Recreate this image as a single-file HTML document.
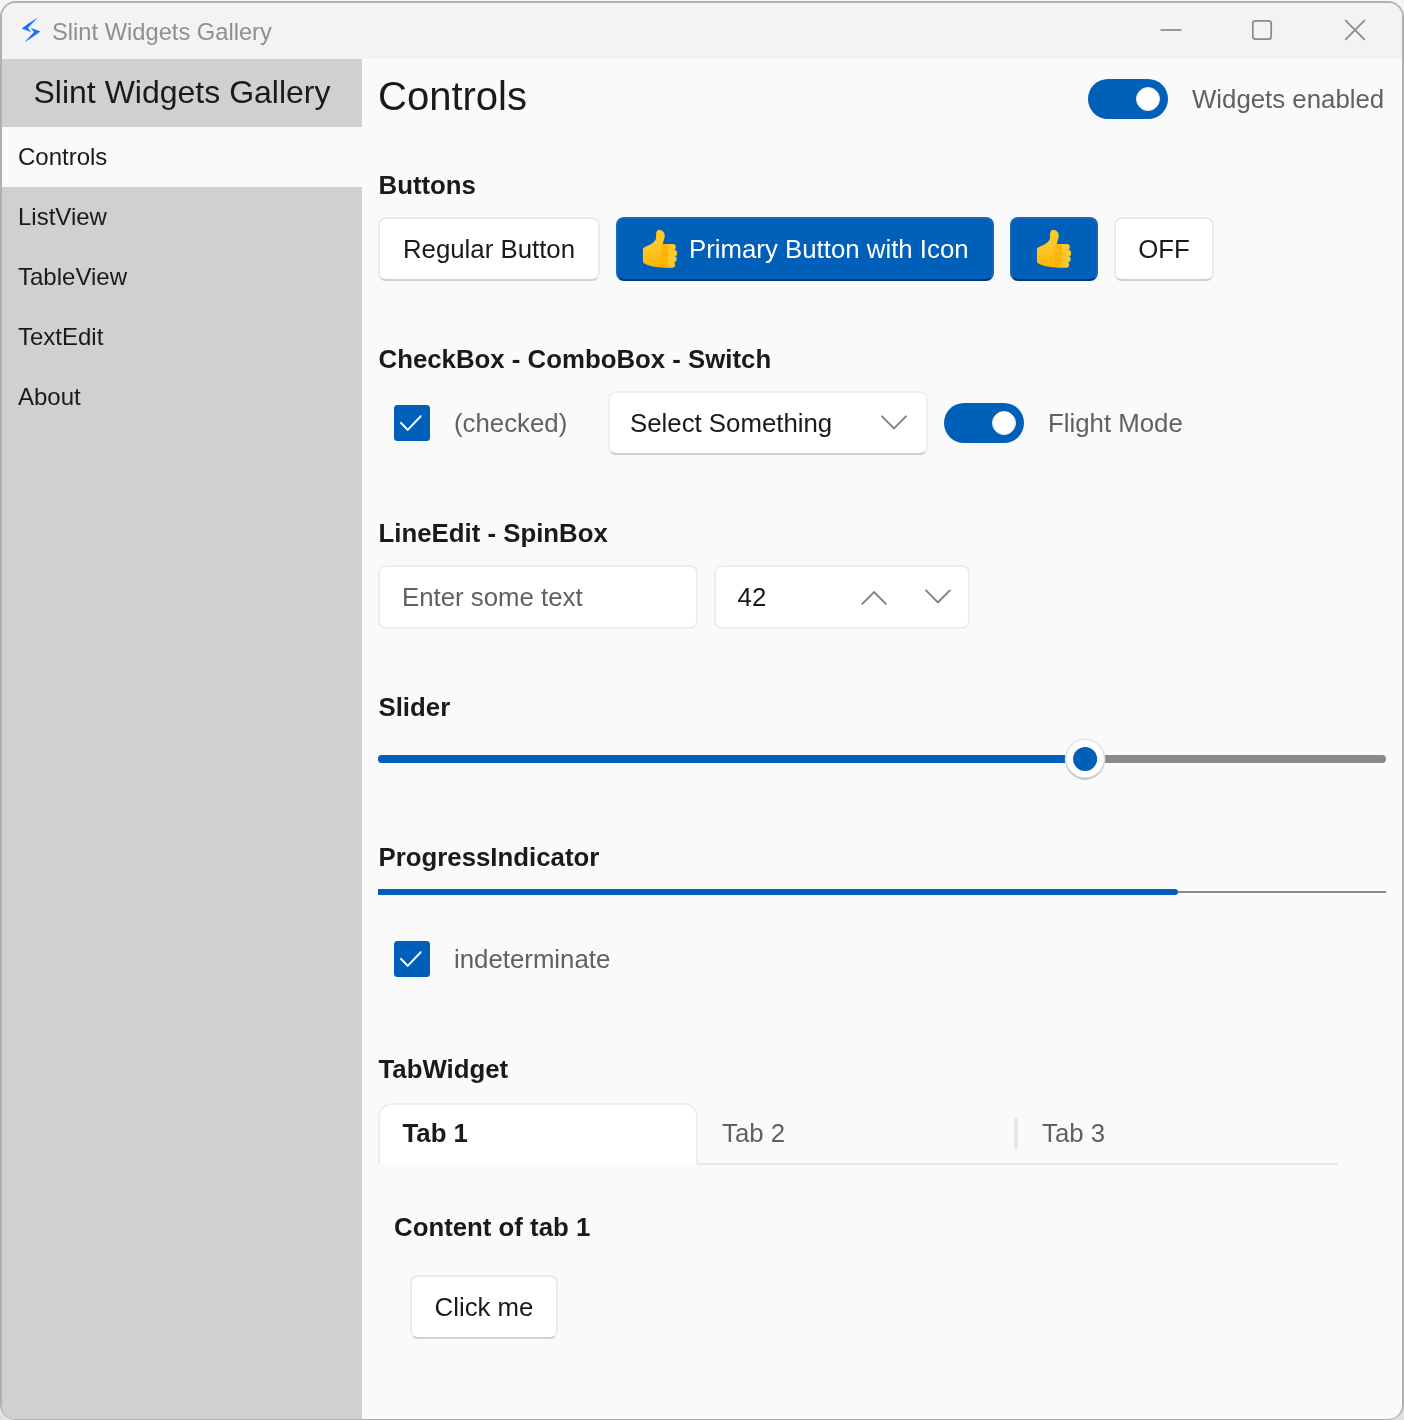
<!DOCTYPE html>
<html lang="en">
<head>
<meta charset="utf-8">
<title>Slint Widgets Gallery</title>
<style>
*{box-sizing:border-box;margin:0;padding:0}
html,body{width:1404px;height:1420px;overflow:hidden;background:linear-gradient(#f5f5f5 0,#f5f5f5 710px,#e0e0e0 710px)}
body{font-family:"Liberation Sans",sans-serif;color:#1a1a1a;position:relative}
.abs{position:absolute}
#win{position:absolute;left:0;top:1px;width:1404px;height:1419px;border-radius:16px;background:#b0b0b0;overflow:hidden}
#inner{position:absolute;left:2px;top:2px;right:2px;bottom:1px;border-radius:14px;overflow:hidden;background:#fafafa}
/* coordinates inside #stage are the target pixel coordinates */
#stage{position:absolute;left:-2px;top:-3px;width:1404px;height:1420px;will-change:transform}
#titlebar{left:0;top:0;width:1404px;height:59px;background:#f3f3f3}
#wtitle{left:52px;top:17px;font-size:23.7px;line-height:30px;color:#8f8f8f;white-space:nowrap}
#sidebar{left:0;top:59px;width:362px;height:1361px;background:#d0d0d0}
#sbhead{left:0;top:59px;width:362px;height:68px;line-height:68px;text-align:center;font-size:32px;white-space:nowrap;padding-left:2px}
.nav{left:0;width:362px;height:60px;line-height:60px;font-size:24px;padding-left:18px;white-space:nowrap}
.nav.sel{background:#fafafa}
h1{position:absolute;left:378px;top:72px;transform:translateY(-.6px);font-size:40px;font-weight:normal;line-height:50px;white-space:nowrap}
.hd{position:absolute;left:378.5px;transform:translateY(-.7px);font-size:25.8px;font-weight:bold;line-height:30px;white-space:nowrap}
.t{position:absolute;font-size:25.8px;line-height:30px;white-space:nowrap}
.sec{color:#616161}
.btn{position:absolute;height:64px;border-radius:8px;background:#fff;border:2px solid #ebebeb;border-bottom-color:#d2d2d2;font-size:25.8px;line-height:60px;text-align:center;white-space:nowrap}
.btn.pri{background:#005fb8;border:2px solid #1168bc;border-bottom-color:#003a74;color:#fff}
.field{position:absolute;height:64px;border-radius:8px;background:#fff;border:2px solid #eeeeee}
.sw{position:absolute;width:80px;height:40px;border-radius:20px;background:#005fb8}
.sw i{position:absolute;left:48px;top:8px;width:24px;height:24px;border-radius:12px;background:#fff;border:1.5px solid #eae4de}
.cb{position:absolute;width:36px;height:36px;border-radius:3.5px;background:#005fb8}
svg{position:absolute;overflow:visible}
</style>
</head>
<body>
<div id="win"><div id="inner"><div id="stage">

<div id="titlebar" class="abs"></div>
<div id="wtitle" class="abs">Slint Widgets Gallery</div>

<div id="sidebar" class="abs"></div>
<div id="sbhead" class="abs"><span style="display:inline-block;transform:translateY(-.6px)">Slint Widgets Gallery</span></div>
<div class="abs nav sel" style="top:127px">Controls</div>
<div class="abs nav" style="top:187px">ListView</div>
<div class="abs nav" style="top:247px">TableView</div>
<div class="abs nav" style="top:307px">TextEdit</div>
<div class="abs nav" style="top:367px">About</div>

<h1>Controls</h1>

<!-- title bar icon + window controls -->
<svg class="abs" style="left:20px;top:16px" width="24" height="28" viewBox="20 16 24 28">
  <path d="M36.7 18.4 Q28.9 23.1 22.0 28.4 L30.8 31.8 L27.7 28.0 Z" fill="#1670f0" stroke="#1670f0" stroke-width=".4" stroke-linejoin="round"/>
  <path d="M25.3 41.6 Q33.1 36.9 40.1 31.6 L31.2 28.2 L34.3 32.0 Z" fill="#1670f0" stroke="#1670f0" stroke-width=".4" stroke-linejoin="round"/>
</svg>
<svg class="abs" style="left:1150px;top:10px" width="230" height="40" viewBox="1150 10 230 40" fill="none" stroke="#8a8a8a" stroke-width="1.7">
  <path d="M1160.5 30 H1181.5"/>
  <rect x="1252.8" y="20.8" width="18.4" height="18.4" rx="2.6"/>
  <path d="M1345.2 20.2 L1364.8 39.8 M1364.8 20.2 L1345.2 39.8"/>
</svg>

<!-- header switch -->
<div class="sw" style="left:1088px;top:79px"><i></i></div>
<div class="t sec" style="left:1192px;top:84px">Widgets enabled</div>

<!-- Buttons -->
<div class="hd" style="top:171px">Buttons</div>
<div class="btn" style="left:378px;top:217px;width:222px">Regular Button</div>
<div class="btn pri" style="left:616px;top:217px;width:378px;text-align:left;padding-left:71px">Primary Button with Icon</div>
<div class="btn pri" style="left:1010px;top:217px;width:88px"></div>
<div class="btn" style="left:1114px;top:217px;width:100px">OFF</div>
<svg class="abs" style="left:638px;top:226px" width="44" height="46" viewBox="0 0 44 46">
  <linearGradient id="pg1" x1="0" y1="0" x2="0" y2="1"><stop offset="0" stop-color="#ffca28"/><stop offset=".55" stop-color="#ffc526"/><stop offset="1" stop-color="#ffb300"/></linearGradient>
  <linearGradient id="fg1" x1="0" y1="0" x2="1" y2="0"><stop offset="0" stop-color="#ffb300"/><stop offset=".38" stop-color="#ffb506"/><stop offset=".5" stop-color="#ffc629"/><stop offset="1" stop-color="#ffca28"/></linearGradient>
  <path fill="url(#pg1)" d="M19.4 4.6 C20.2 3.9 21.2 3.8 22.2 3.9 C23.4 4.1 24.4 4.6 25.1 5.6 C25.9 6.6 26.6 7.6 26.7 8.9 C26.8 10.3 26.5 11.7 26.2 13.0 C25.9 14.2 25.4 15.4 25.1 16.6 L24.8 18.6 L27 18.5 L27 41.6 L25.9 41.6 C22.2 41.5 18.5 41.2 14.9 40.5 C13.5 40.3 12.3 39.8 11.0 39.4 C9.3 38.9 7.6 38.5 6.2 37.6 C5.5 37.1 4.9 36.4 4.9 35.6 L4.9 23.3 C4.9 22.3 5.6 21.6 6.5 21.2 C8.1 20.5 9.8 19.9 11.3 19.1 C12.9 18.3 14.3 17.3 15.5 16.2 C16.5 15.4 17.3 14.4 17.8 13.3 C18.3 11.7 18.0 9.8 18.1 8.1 C18.1 7.3 18.3 6.5 18.6 5.8 C18.8 5.3 19.0 4.9 19.4 4.6 Z"/>
  <path fill="none" stroke="#f2a600" stroke-width=".8" stroke-linecap="round" d="M17.3 32.4 C19.6 32.3 21.4 31.1 22.4 29.0"/>
  <rect x="23.4" y="18.0" width="14.4" height="6.3" rx="3" fill="url(#fg1)"/>
  <rect x="23.6" y="24.1" width="15.5" height="6.3" rx="3" fill="url(#fg1)"/>
  <rect x="23.6" y="30.1" width="15.0" height="6.1" rx="3" fill="url(#fg1)"/>
  <rect x="23.4" y="35.8" width="13.7" height="6.0" rx="3" fill="url(#fg1)"/>
  <path fill="none" stroke="#ffd04a" stroke-opacity=".55" stroke-width=".5" stroke-linecap="round" d="M24.6 24.25 H36 M24.6 30.2 H37.2 M24.6 35.95 H36.4"/>
  <path fill="none" stroke="#f5a900" stroke-opacity=".7" stroke-width=".7" stroke-linecap="round" d="M23.5 19.6 C22.6 23 22.9 26 23.7 29.4 C23.0 33 23.2 37 24.4 40.6"/>
</svg>
<svg class="abs" style="left:1032px;top:226px" width="44" height="46" viewBox="0 0 44 46">
  <linearGradient id="pg2" x1="0" y1="0" x2="0" y2="1"><stop offset="0" stop-color="#ffca28"/><stop offset=".55" stop-color="#ffc526"/><stop offset="1" stop-color="#ffb300"/></linearGradient>
  <linearGradient id="fg2" x1="0" y1="0" x2="1" y2="0"><stop offset="0" stop-color="#ffb300"/><stop offset=".38" stop-color="#ffb506"/><stop offset=".5" stop-color="#ffc629"/><stop offset="1" stop-color="#ffca28"/></linearGradient>
  <path fill="url(#pg2)" d="M19.4 4.6 C20.2 3.9 21.2 3.8 22.2 3.9 C23.4 4.1 24.4 4.6 25.1 5.6 C25.9 6.6 26.6 7.6 26.7 8.9 C26.8 10.3 26.5 11.7 26.2 13.0 C25.9 14.2 25.4 15.4 25.1 16.6 L24.8 18.6 L27 18.5 L27 41.6 L25.9 41.6 C22.2 41.5 18.5 41.2 14.9 40.5 C13.5 40.3 12.3 39.8 11.0 39.4 C9.3 38.9 7.6 38.5 6.2 37.6 C5.5 37.1 4.9 36.4 4.9 35.6 L4.9 23.3 C4.9 22.3 5.6 21.6 6.5 21.2 C8.1 20.5 9.8 19.9 11.3 19.1 C12.9 18.3 14.3 17.3 15.5 16.2 C16.5 15.4 17.3 14.4 17.8 13.3 C18.3 11.7 18.0 9.8 18.1 8.1 C18.1 7.3 18.3 6.5 18.6 5.8 C18.8 5.3 19.0 4.9 19.4 4.6 Z"/>
  <path fill="none" stroke="#f2a600" stroke-width=".8" stroke-linecap="round" d="M17.3 32.4 C19.6 32.3 21.4 31.1 22.4 29.0"/>
  <rect x="23.4" y="18.0" width="14.4" height="6.3" rx="3" fill="url(#fg2)"/>
  <rect x="23.6" y="24.1" width="15.5" height="6.3" rx="3" fill="url(#fg2)"/>
  <rect x="23.6" y="30.1" width="15.0" height="6.1" rx="3" fill="url(#fg2)"/>
  <rect x="23.4" y="35.8" width="13.7" height="6.0" rx="3" fill="url(#fg2)"/>
  <path fill="none" stroke="#ffd04a" stroke-opacity=".55" stroke-width=".5" stroke-linecap="round" d="M24.6 24.25 H36 M24.6 30.2 H37.2 M24.6 35.95 H36.4"/>
  <path fill="none" stroke="#f5a900" stroke-opacity=".7" stroke-width=".7" stroke-linecap="round" d="M23.5 19.6 C22.6 23 22.9 26 23.7 29.4 C23.0 33 23.2 37 24.4 40.6"/>
</svg>

<!-- CheckBox - ComboBox - Switch -->
<div class="hd" style="top:345px">CheckBox - ComboBox - Switch</div>
<div class="cb" style="left:394px;top:405px"><svg style="left:0;top:0" width="36" height="36" viewBox="0 0 36 36" fill="none" stroke="#fff" stroke-width="2" stroke-linecap="round" stroke-linejoin="round"><path d="M7.0 17.9 L13.7 24.9 L26.7 11.2"/></svg></div>
<div class="t sec" style="left:454px;top:408px">(checked)</div>
<div class="field" style="left:608px;top:391px;width:320px;border-bottom-color:#cfcfcf"></div>
<div class="t" style="left:630px;top:408px">Select Something</div>
<svg class="abs" style="left:880px;top:414px" width="28" height="18" viewBox="880 414 28 18" fill="none" stroke="#808080" stroke-width="1.9" stroke-linecap="round"><path d="M882 416.3 L894 428.3 L906 416.3"/></svg>
<div class="sw" style="left:944px;top:403px"><i></i></div>
<div class="t sec" style="left:1048px;top:408px">Flight Mode</div>

<!-- LineEdit - SpinBox -->
<div class="hd" style="top:519px">LineEdit - SpinBox</div>
<div class="field" style="left:378px;top:565px;width:320px"></div>
<div class="t sec" style="left:402px;top:582px">Enter some text</div>
<div class="field" style="left:714px;top:565px;width:256px"></div>
<div class="t" style="left:737.6px;top:582px">42</div>
<svg class="abs" style="left:860px;top:588px" width="92" height="18" viewBox="860 588 92 18" fill="none" stroke="#808080" stroke-width="1.9" stroke-linecap="round"><path d="M862.3 603.8 L874.1 592 L885.9 603.8"/><path d="M926 590.4 L937.9 602.3 L949.8 590.4"/></svg>

<!-- Slider -->
<div class="hd" style="top:693px">Slider</div>
<div class="abs" style="left:378px;top:755px;width:1008px;height:8px;border-radius:4px;background:#8a8a8a"></div>
<div class="abs" style="left:378px;top:755px;width:700px;height:8px;border-radius:4px 0 0 4px;background:#005fb8"></div>
<svg class="abs" style="left:1060px;top:734px" width="50" height="50" viewBox="1060 734 50 50">
  <linearGradient id="thg" x1="0" y1="0" x2="0" y2="1"><stop offset="0" stop-color="#ebebeb"/><stop offset=".55" stop-color="#dedede"/><stop offset="1" stop-color="#c6c6c6"/></linearGradient>
  <ellipse cx="1085.1" cy="759" rx="20.3" ry="20.9" fill="url(#thg)"/>
  <circle cx="1085.1" cy="758.9" r="18.7" fill="#fff"/>
  <circle cx="1085.1" cy="759" r="12" fill="#005fb8"/>
</svg>

<!-- ProgressIndicator -->
<div class="hd" style="top:843px">ProgressIndicator</div>
<div class="abs" style="left:378px;top:891px;width:1008px;height:2px;background:#8a8a8a"></div>
<div class="abs" style="left:378px;top:889px;width:800px;height:6px;border-radius:0 3px 3px 0;background:#005fb8"></div>
<div class="cb" style="left:394px;top:941px"><svg style="left:0;top:0" width="36" height="36" viewBox="0 0 36 36" fill="none" stroke="#fff" stroke-width="2" stroke-linecap="round" stroke-linejoin="round"><path d="M7.0 17.9 L13.7 24.9 L26.7 11.2"/></svg></div>
<div class="t sec" style="left:454px;top:944px">indeterminate</div>

<!-- TabWidget -->
<div class="hd" style="top:1055px">TabWidget</div>
<div class="abs" style="left:378px;top:1163px;width:960px;height:2px;background:#e8e8e8"></div>
<div class="abs" style="left:378px;top:1103px;width:320px;height:62px;background:#fff;border:2px solid #eeeeee;border-bottom:none;border-radius:14px 14px 0 0"></div>
<div class="t" style="left:402.5px;top:1118px;font-weight:bold">Tab 1</div>
<div class="t sec" style="left:722px;top:1118px">Tab 2</div>
<div class="abs" style="left:1014px;top:1117px;width:4px;height:32px;border-radius:2px;background:#e8e8e8"></div>
<div class="t sec" style="left:1042px;top:1118px">Tab 3</div>
<div class="hd" style="left:394px;top:1213px">Content of tab 1</div>
<div class="btn" style="left:410px;top:1275px;width:148px">Click me</div>

</div></div></div>
</body>
</html>
